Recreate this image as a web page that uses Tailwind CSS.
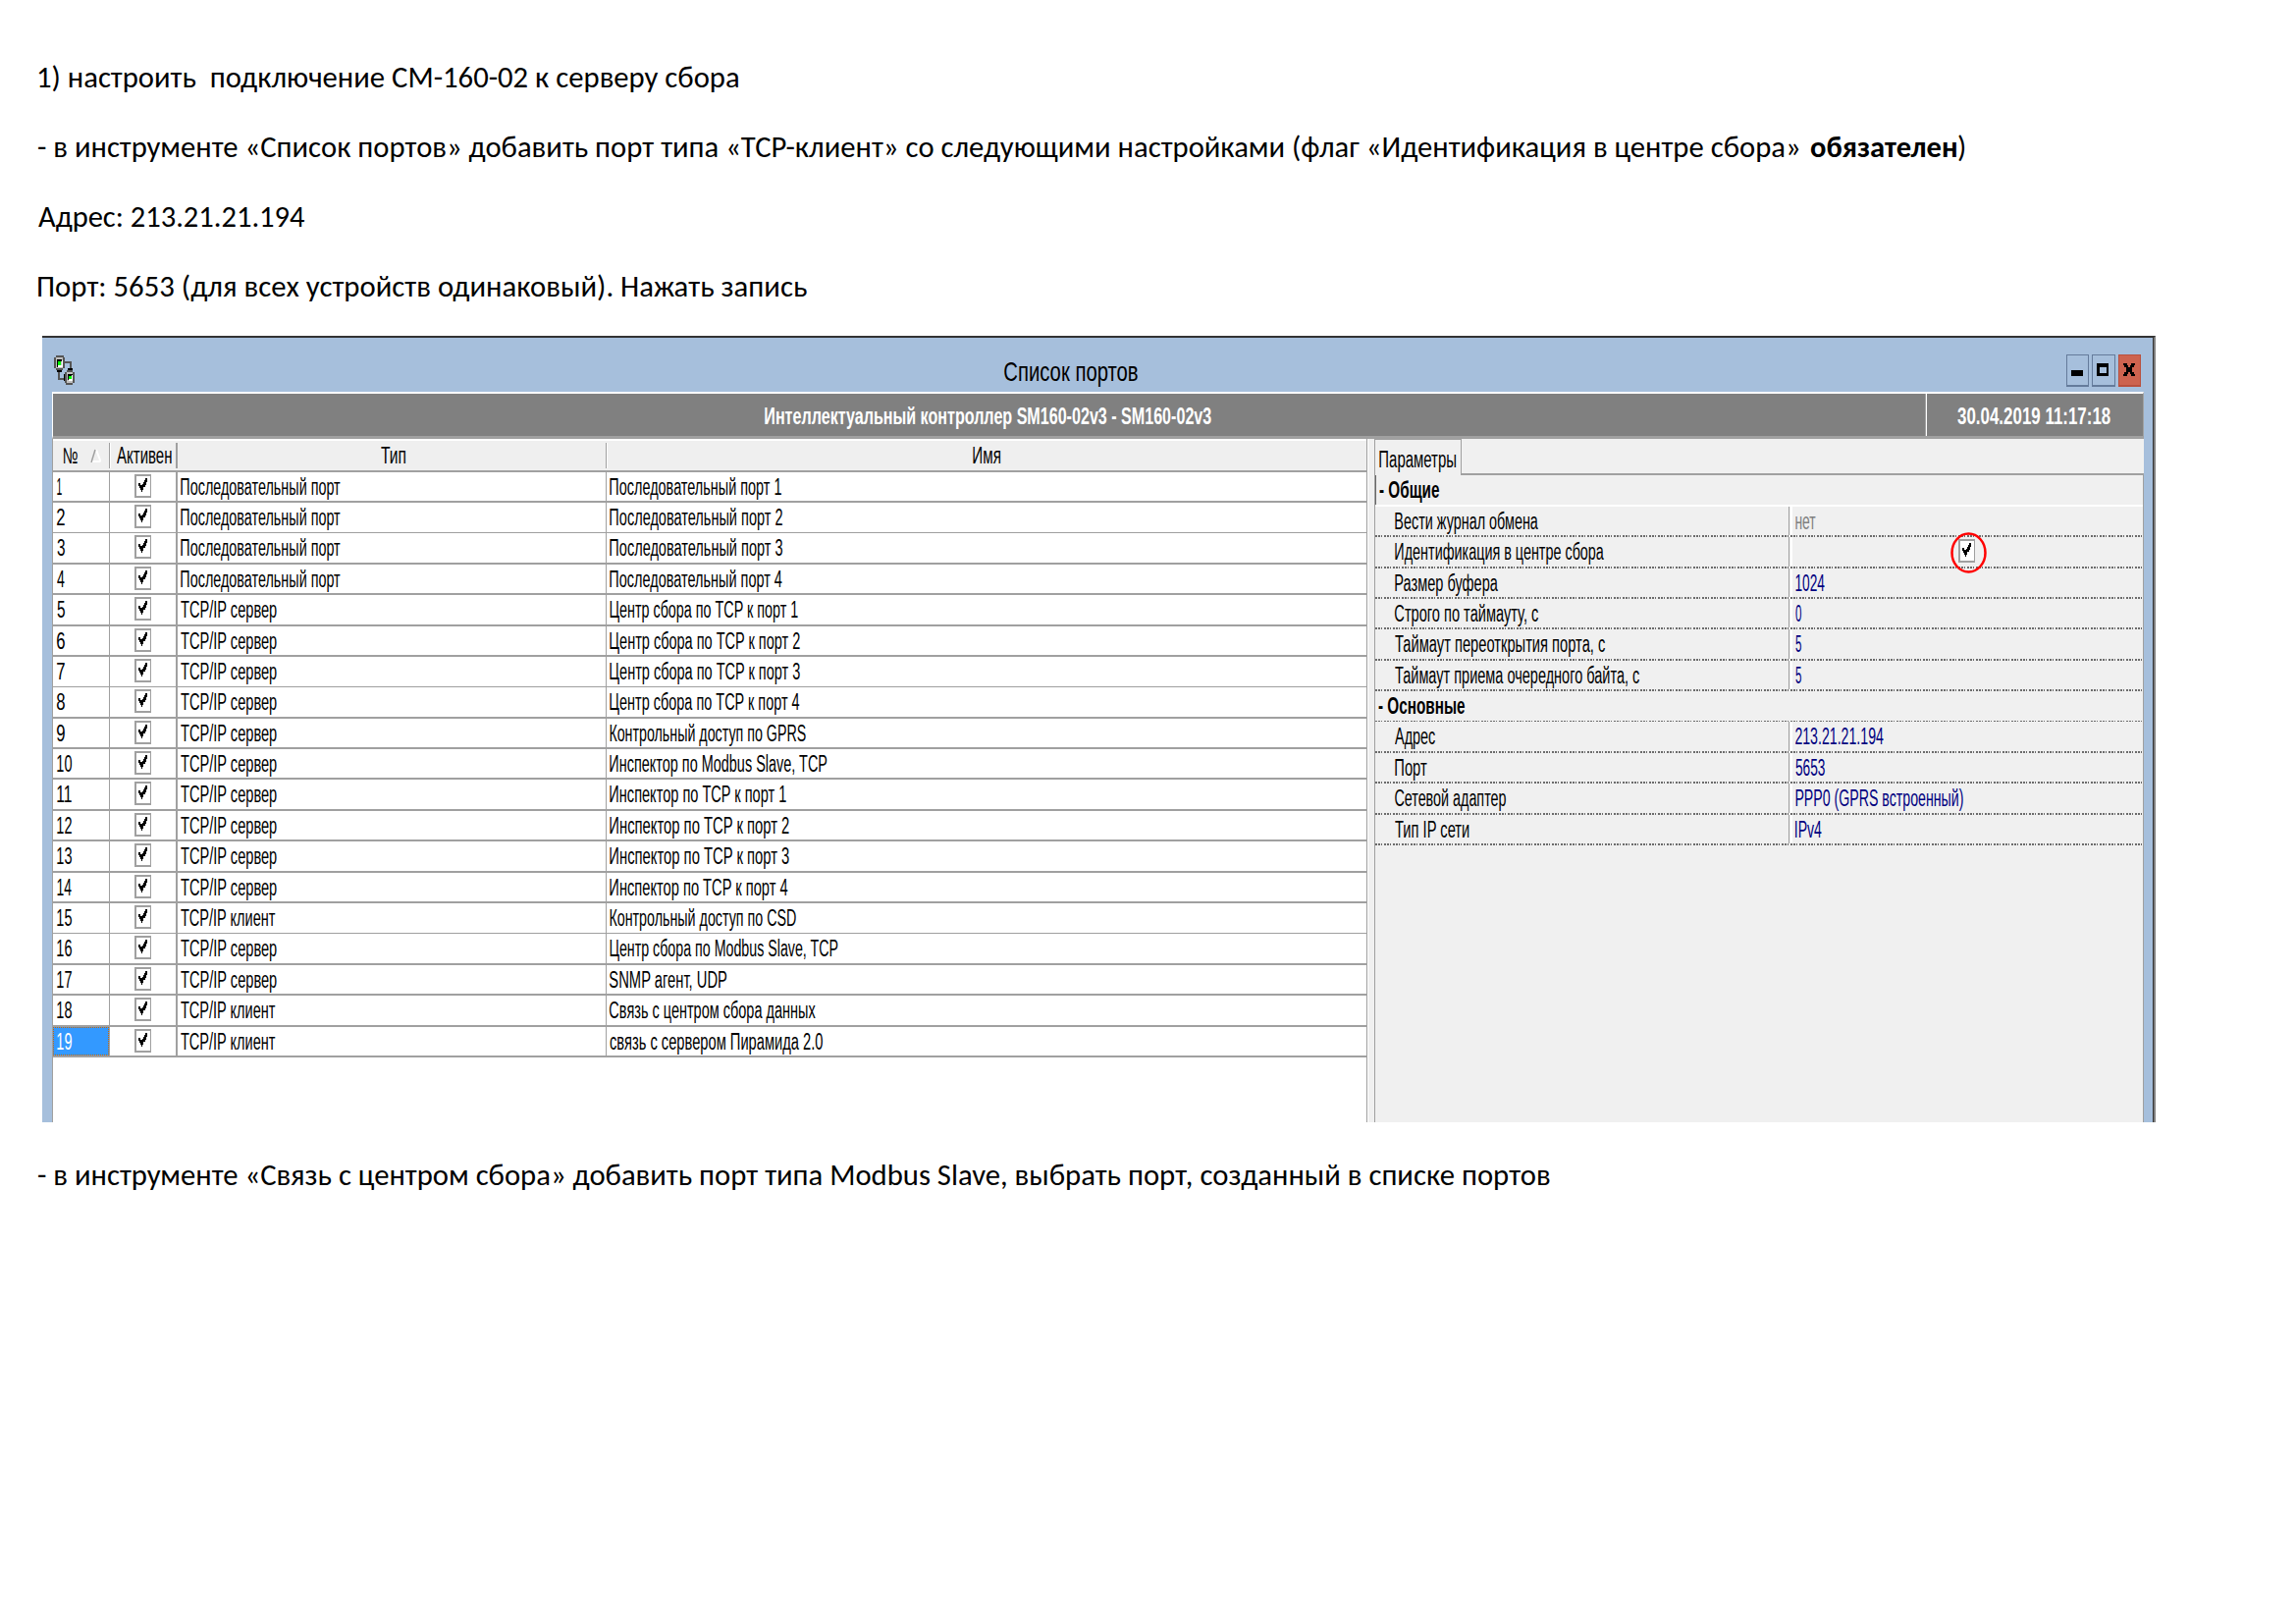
<!DOCTYPE html>
<html lang="ru">
<head>
<meta charset="utf-8">
<title>Список портов</title>
<script src="https://cdn.jsdelivr.net/npm/@tailwindcss/browser@4"></script>
</head>
<body class="bg-white text-black w-[2339px] h-[1654px] overflow-hidden">
<main class="pt-[43px] pl-[39px] font-[Carlito,Lato,sans-serif] text-[30.5px] leading-[71px]">
  <p class="h-[71px] whitespace-nowrap"><span data-w="713" data-f="30.5px Carlito, Lato, sans-serif">1) настроить  подключение СМ-160-02 к серверу сбора</span></p>
  <p class="h-[71px] flex whitespace-nowrap"><span data-w="1794" data-f="30.5px Carlito, Lato, sans-serif">- в инструменте «Список портов» добавить порт типа «TCP-клиент» со следующими настройками (флаг «Идентификация в центре сбора»</span><b class="ml-[11px]" data-w="149" data-f="bold 30.5px Carlito, Lato, sans-serif">обязателен</b><span class="ml-[2px]" data-w="7" data-f="30.5px Carlito, Lato, sans-serif">)</span></p>
  <p class="h-[71px] whitespace-nowrap"><span data-w="271" data-f="30.5px Carlito, Lato, sans-serif">Адрес: 213.21.21.194</span></p>
  <p class="h-[71px] whitespace-nowrap"><span data-w="783" data-f="30.5px Carlito, Lato, sans-serif">Порт: 5653 (для всех устройств одинаковый). Нажать запись</span></p>

  <section class="mt-[15px] ml-[4px] w-[2153px] h-[801px] flex flex-col bg-[#a6bfdc] border-t-2 border-t-[#333] border-r-2 border-r-[#808080] font-['Liberation_Sans',sans-serif] text-[23px] leading-[27px]">
    <div class="h-full border-r border-[#333] flex flex-col">
    <header class="h-[55px] shrink-0 flex items-start">
      <svg class="ml-[12px] mt-[18px]" width="21" height="30" viewBox="0 0 21 30" shape-rendering="crispEdges">
        <path d="M11 7h6v7M5 16v8h6" fill="none" stroke="#555" stroke-width="2"/>
        <path d="M2 0h8v2h1v11h-2v2H2v-2H0V2h2z" fill="#555"/><path d="M2 2h7v11H2z" fill="#c0c0c0"/><path d="M3 4h5v2H5v6H3z" fill="#000"/><path d="M4 10h4V5h1v7H4z" fill="#fff"/><path d="M4 6h3v4H4z" fill="#0f0"/>
        <path d="M3 15h5v2H3zM14 13h5v2h-5zM10 19h2v7h-2z" fill="#000"/>
        <path d="M13 15h6v2h2v11h-2v2h-7v-2h-1V17h2z" fill="#555"/><path d="M13 17h6v11h-6z" fill="#c0c0c0"/><path d="M14 19h5v2h-4v4h-1z" fill="#000"/><path d="M15 24h3v-4h1v6h-4z" fill="#fff"/><path d="M15 21h3v3h-3z" fill="#0f0"/>
      </svg>
      <h1 class="ml-[947px] mt-[21px] text-[28px] leading-[28px] whitespace-nowrap"><span data-w="136" data-f="28px Liberation Sans">Список портов</span></h1>
      <div class="ml-auto mr-[12px] mt-[17px] flex">
        <svg width="23" height="33" viewBox="0 0 23 33" shape-rendering="crispEdges"><path d="M0 0h23v33H0z" fill="#647b9b"/><path d="M1 1h21v30H1z" fill="#a6bfdc"/><path d="M5 16h12v6H5z"/></svg>
        <svg class="ml-[3px]" width="24" height="33" viewBox="0 0 24 33" shape-rendering="crispEdges"><path d="M0 0h24v33H0z" fill="#647b9b"/><path d="M1 1h22v30H1z" fill="#a6bfdc"/><path fill-rule="evenodd" d="M5 9h12v13H5zM8 13v6h7v-6z"/></svg>
        <svg class="ml-[3px]" width="23" height="33" viewBox="0 0 23 33" shape-rendering="crispEdges"><path d="M0 0h23v33H0z" fill="#b9503e"/><path d="M1 1h21v30H1z" fill="#cd634f"/><path d="M5 9h4v2h1v2h2v-2h1V9h4v2h-1v2h-2v5h2v2h1v2h-4v-2h-1v-2h-2v2H9v2H5v-2h1v-2h2v-5H6v-2H5z"/></svg>
      </div>
    </header>
    <div class="mx-[10px] mr-[9px] flex-1 min-h-0 flex flex-col">
      <div class="h-[48px] shrink-0 flex bg-[#808080] border-t-2 border-t-white border-l border-l-white border-r border-r-[#a0a0a0] border-b-3 border-b-[#a0a0a0] text-white font-bold text-[24px] leading-[45px] whitespace-nowrap">
        <div class="w-[1908px] pl-[725px] border-r border-[#a0a0a0]"><span data-w="455" data-f="bold 24px Liberation Sans">Интеллектуальный контроллер SM160-02v3 - SM160-02v3</span></div>
        <div class="flex-1 pl-[31px] border-l border-white"><span data-w="156" data-f="bold 24px Liberation Sans">30.04.2019 11:17:18</span></div>
      </div>
      <div class="flex-1 min-h-0 flex">
        <div class="w-[1340px] bg-white border-l border-r border-[#a0a0a0]">
          <div class="h-[34px] flex bg-[#efefef] border-t-2 border-t-white border-b-2 border-b-[#a0a0a0] whitespace-nowrap pt-[2px] leading-[27px]">
            <div class="w-[58px] h-[26px] pl-[11px] border-r border-[#a0a0a0] flex"><span data-w="14">№</span>
              <svg class="ml-[13px] mt-[6px]" width="11" height="14" viewBox="0 0 11 14"><path d="M1 13L5 1L10 13z" fill="#efefef"/><path d="M0 13h10.500M6 1l4.500 12" stroke="#fff" stroke-width="2" fill="none"/><path d="M1 14L5 1" stroke="#a0a0a0" stroke-width="1.500"/></svg>
            </div>
            <div class="w-[69px] h-[26px] pl-[6px] border-l border-l-white border-r-2 border-r-[#a0a0a0]"><span data-w="56">Активен</span></div>
            <div class="w-[437px] h-[26px] pl-[207px] border-r border-[#a0a0a0]"><span data-w="25">Тип</span></div>
            <div class="flex-1 h-[26px] pl-[372px] border-l border-white"><span data-w="28">Имя</span></div>
          </div>
          <div id="ports"></div>
        </div>
        <div class="flex-1 flex bg-[#f0f0f0] border-l border-l-white">
          <div class="ml-[6px] flex-1 border-l border-[#a0a0a0]">
            <div class="h-[37px] flex whitespace-nowrap">
              <div class="w-[88px] pl-[4px] pt-[7px] leading-[27px] border-t border-r border-[#a0a0a0]"><span data-w="78">Параметры</span></div>
              <div class="flex-1 border-b-2 border-[#a0a0a0]"></div>
            </div>
            <div id="params" class="border-r border-[#a0a0a0] h-[659px]"></div>
          </div>
        </div>
      </div>
    </div>
    </div>
  </section>
  <p class="mt-[18px] h-[71px] whitespace-nowrap"><span data-w="1540" data-f="30.5px Carlito, Lato, sans-serif">- в инструменте «Связь с центром сбора» добавить порт типа Modbus Slave, выбрать порт, созданный в списке портов</span></p>
</main>
<script>
  const check = `<svg width="17" height="24" viewBox="0 0 17 24" shape-rendering="crispEdges"><path d="M0 0h17v24H0z" fill="#a0a0a0"/><path d="M2 2h14v20H2z" fill="#fff"/><path d="M4 9h2v2h2v-1h1V8h1V6h1V4h2v4h-1v3h-1v2H9v3h-1v2H7v-2H6v-2H5v-2H4z"/></svg>`;
  const S = 'Последовательный порт', V = 'TCP/IP сервер', C = 'TCP/IP клиент';
  const ports = [
    [S, S + ' 1', 175], [S, S + ' 2', 176], [S, S + ' 3', 176], [S, S + ' 4', 176],
    [V, 'Центр сбора по TCP к порт 1', 192], [V, 'Центр сбора по TCP к порт 2', 194], [V, 'Центр сбора по TCP к порт 3', 194], [V, 'Центр сбора по TCP к порт 4', 194],
    [V, 'Контрольный доступ по GPRS', 200], [V, 'Инспектор по Modbus Slave, TCP', 222],
    [V, 'Инспектор по TCP к порт 1', 180], [V, 'Инспектор по TCP к порт 2', 183], [V, 'Инспектор по TCP к порт 3', 183], [V, 'Инспектор по TCP к порт 4', 182],
    [C, 'Контрольный доступ по CSD', 190], [V, 'Центр сбора по Modbus Slave, TCP', 233], [V, 'SNMP агент, UDP', 120],
    [C, 'Связь с центром сбора данных', 210], [C, 'связь с сервером Пирамида 2.0', 217]
  ];
  const ends = [481, 512, 543, 575, 606, 638, 669, 700, 732, 763, 794, 826, 857, 889, 920, 951, 983, 1014, 1046, 1077];
  const thin = [1, 6, 14];
  document.getElementById('ports').innerHTML = ports.map(([type, name, w], i) => `
    <div class="flex border-[#a0a0a0] whitespace-nowrap ${thin.includes(i) ? 'border-b' : 'border-b-2'}" style="height:${ends[i + 1] - ends[i]}px">
      <div class="w-[58px] border-r border-[#a0a0a0]"><div class="h-full ${i === 18 ? 'pl-[3px] pt-px bg-[#3399ff] text-white border border-dotted border-[#cc6600]' : 'pt-[2px] pl-[4px]'}"><span data-w="${i === 0 ? 5 : i < 9 ? 8 : 15}">${i + 1}</span></div></div>
      <div class="w-[69px] pl-[25px] pt-[2px] border-r-2 border-[#a0a0a0]">${check}</div>
      <div class="w-[437px] pl-[3px] pt-[2px] border-r border-[#a0a0a0]"><span data-w="${type === S ? 163 : type === V ? 98 : 97}">${type}</span></div>
      <div class="flex-1 pl-[3px] pt-[2px]"><span data-w="${w}">${name}</span></div>
    </div>`).join('');

  const params = [
    ['- Общие', 61], ['Вести журнал обмена', 146, 'нет', 21], ['Идентификация в центре сбора', 213, null, 0], ['Размер буфера', 105, '1024', 30],
    ['Строго по таймауту, с', 146, '0', 6], ['Таймаут переоткрытия порта, с', 214, '5', 6], ['Таймаут приема очередного байта, с', 249, '5', 6],
    ['- Основные', 88], ['Адрес', 41, '213.21.21.194', 90], ['Порт', 33, '5653', 30], ['Сетевой адаптер', 113, 'PPP0 (GPRS встроенный)', 171], ['Тип IP сети', 76, 'IPv4', 27]
  ];
  const pe = [484, 516, 547, 579, 610, 641, 673, 704, 735, 767, 798, 830, 861];
  const dots = 'bg-[repeating-linear-gradient(90deg,#6b6b6b_0_2px,transparent_2px_3px,#6b6b6b_3px_5px,transparent_5px_6px,#6b6b6b_6px_7px,transparent_7px_9px)]';
  document.getElementById('params').innerHTML = params.map(([label, lw, value, vw], i) => {
    const h = pe[i + 1] - pe[i];
    const body = value === undefined
      ? `<div class="flex-1 pl-[3px] pt-[2px] font-bold ${i ? '' : 'border-l border-[#696969]'}"><span data-w="${lw}" data-f="bold 23px Liberation Sans">${label}</span></div>`
      : `<div class="w-[421px] pl-[20px] pt-[2px]"><span data-w="${lw}">${label}</span></div>
         <div class="flex-1 border-l border-[#a0a0a0] flex"><div class="w-[2px] ml-[1px] bg-white"></div>
         ${value === null
           ? `<div class="relative ml-[169px] mt-[2px]">${check}<svg class="absolute left-[-8px] top-[-7px]" width="37" height="42" viewBox="0 0 37 42"><ellipse cx="18.500" cy="21" rx="17" ry="19.500" fill="none" stroke="#f00" stroke-width="2.500"/></svg></div>`
           : `<div class="pl-[3px] pt-[2px] ${value === 'нет' ? 'text-[#808080]' : 'text-[#000080]'}"><span data-w="${vw}">${value}</span></div>`}</div>`;
    return `<div class="flex flex-col whitespace-nowrap" style="height:${h}px"><div class="flex-1 min-h-0 flex">${body}</div><div class="shrink-0 ${i === 7 ? 'h-px' : 'h-[2px]'} ${i ? dots : 'bg-white'}"></div></div>`;
  }).join('');

  const ctx = document.createElement('canvas').getContext('2d');
  document.querySelectorAll('[data-w]').forEach(el => {
    ctx.font = el.dataset.f || '23px Liberation Sans';
    const m = ctx.measureText(el.textContent);
    const left = -m.actualBoundingBoxLeft, ink = m.actualBoundingBoxRight + m.actualBoundingBoxLeft;
    const k = el.dataset.w / ink;
    const inner = document.createElement('span');
    inner.className = 'inline-block origin-left whitespace-pre';
    inner.textContent = el.textContent;
    inner.style.transform = `translateX(${left * -k}px) scaleX(${k})`;
    el.textContent = '';
    el.append(inner);
    el.style.display = 'block';
    el.style.width = el.dataset.w + 'px';
  });
</script>
</body>
</html>
